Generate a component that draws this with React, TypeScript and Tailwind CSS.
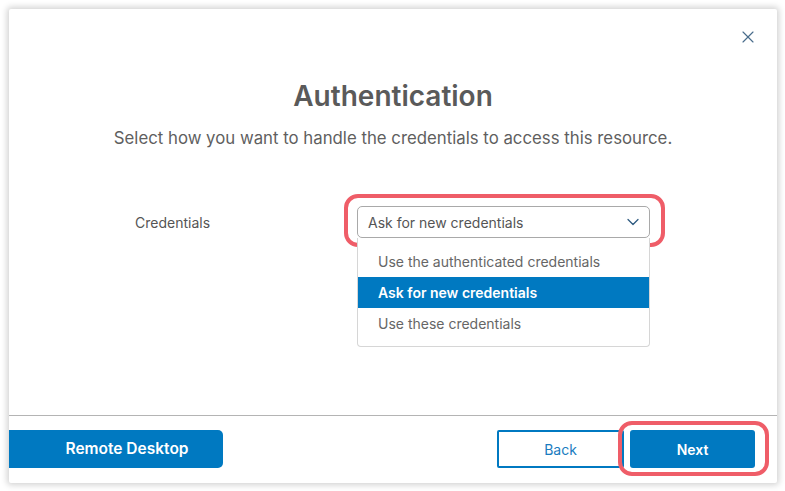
import { ChevronDown, X } from "lucide-react";

const options = [
  "Use the authenticated credentials",
  "Ask for new credentials",
  "Use these credentials",
];

const App = () => {
  const selected = "Ask for new credentials";

  return (
    <div
      className="h-[491px] w-[785px] bg-white pb-[8px] pl-[9px] pr-[8px] pt-[9px]"
      style={{ fontFamily: "Inter, 'Noto Sans', sans-serif" }}
    >
      <div className="relative flex h-full flex-col rounded-[2px] bg-white shadow-[0_0_6px_2px_rgba(0,0,0,0.18)]">
        <button type="button" className="absolute right-[19px] top-[18px] text-[#4a6d8c]">
          <X size={20} strokeWidth={1.4} />
        </button>

        <div className="flex flex-1 flex-col items-center pt-[70px]">
          <h1 className="text-[28px] font-semibold leading-[34px] text-[#5a5a5a]">Authentication</h1>
          <p className="mt-[13px] text-[16.8px] leading-[24px] text-[#5f5f5f]">
            Select how you want to handle the credentials to access this resource.
          </p>

          <div className="mt-[56px] flex w-full items-center">
            <label className="ml-[126px] w-[222px] text-[14px] text-[#555]">Credentials</label>
            <div className="relative w-[293px]">
              <div className="pointer-events-none absolute -bottom-[9px] -left-[13px] -right-[15px] -top-[12px] rounded-[14px] border-[4px] border-[#ef5d68]" />
              <div className="flex h-[32px] items-center justify-between rounded-[5px] border border-[#a9a9a9] bg-white pl-[10px] pr-[6px]">
                <span className="text-[14px] text-[#555]">{selected}</span>
                <ChevronDown size={20} strokeWidth={1.5} className="text-[#2e5a80]" />
              </div>
              <ul className="absolute left-0 right-0 top-[32px] rounded-b-[4px] border border-t-0 border-[#d6d6d6] bg-white pb-[7px] pt-[8px]">
                {options.map((option) => (
                  <li
                    key={option}
                    className={
                      option === selected
                        ? "flex h-[31px] items-center bg-[#0079c1] pl-[20px] text-[14px] font-semibold text-white"
                        : "flex h-[31px] items-center pl-[20px] text-[14px] text-[#666]"
                    }
                  >
                    {option}
                  </li>
                ))}
              </ul>
            </div>
          </div>
        </div>

        <div className="flex h-[68px] items-start border-t border-[#b4b4b4] pt-[14px]">
          <button
            type="button"
            className="h-[38px] w-[214px] rounded-r-[5px] bg-[#0079c1] pl-[22px] text-[15.5px] font-semibold text-white"
          >
            Remote Desktop
          </button>
          <div className="ml-auto mr-[22px] flex gap-[6px]">
            <button
              type="button"
              className="h-[38px] w-[127px] rounded-[2px] border-2 border-[#0079c1] bg-white text-[14px] text-[#1a7cc0]"
            >
              Back
            </button>
            <div className="relative">
              <div className="pointer-events-none absolute -bottom-[8px] -left-[12px] -right-[14px] -top-[9px] rounded-[14px] border-[4px] border-[#ef5d68]" />
              <button
                type="button"
                className="relative h-[38px] w-[125px] rounded-[3px] bg-[#0079c1] text-[14px] font-semibold text-white"
              >
                Next
              </button>
            </div>
          </div>
        </div>
      </div>
    </div>
  );
};

export default App;
